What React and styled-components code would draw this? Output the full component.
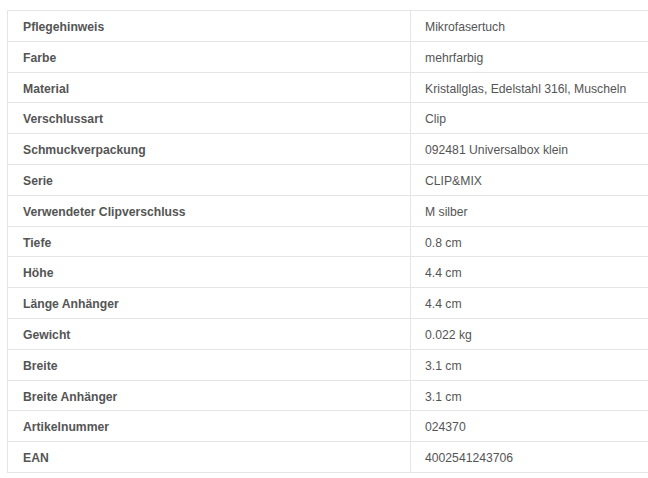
import React from 'react';
import styled, { createGlobalStyle } from 'styled-components';

const rows = [
  ['Pflegehinweis', 'Mikrofasertuch'],
  ['Farbe', 'mehrfarbig'],
  ['Material', 'Kristallglas, Edelstahl 316l, Muscheln'],
  ['Verschlussart', 'Clip'],
  ['Schmuckverpackung', '092481 Universalbox klein'],
  ['Serie', 'CLIP&MIX'],
  ['Verwendeter Clipverschluss', 'M silber'],
  ['Tiefe', '0.8 cm'],
  ['Höhe', '4.4 cm'],
  ['Länge Anhänger', '4.4 cm'],
  ['Gewicht', '0.022 kg'],
  ['Breite', '3.1 cm'],
  ['Breite Anhänger', '3.1 cm'],
  ['Artikelnummer', '024370'],
  ['EAN', '4002541243706'],
];

const GlobalStyle = createGlobalStyle`
  body {
    margin: 0;
    background: #fff;
    font-family: "Liberation Sans", Arial, sans-serif;
    overflow: hidden;
  }
`;

const Wrapper = styled.div`
  padding: 10px 0 0 7px;
`;

const Table = styled.table`
  border-collapse: collapse;
  width: 680px;
  table-layout: fixed;
  font-size: 12.2px;
  color: #555;
`;

const Cell = styled.td`
  border: 1px solid #e5e5e5;
  padding: 8px 14px 4px ${p => (p.$label ? '15px' : '14px')};
  line-height: 17.8px;
  font-weight: ${p => (p.$label ? 700 : 400)};
  width: ${p => (p.$label ? '373px' : 'auto')};
  white-space: nowrap;
`;

const App = () => (
  <>
    <GlobalStyle />
    <Wrapper>
      <Table>
        <tbody>
          {rows.map(([label, value]) => (
            <tr key={label}>
              <Cell $label>{label}</Cell>
              <Cell>{value}</Cell>
            </tr>
          ))}
        </tbody>
      </Table>
    </Wrapper>
  </>
);

export default App;
